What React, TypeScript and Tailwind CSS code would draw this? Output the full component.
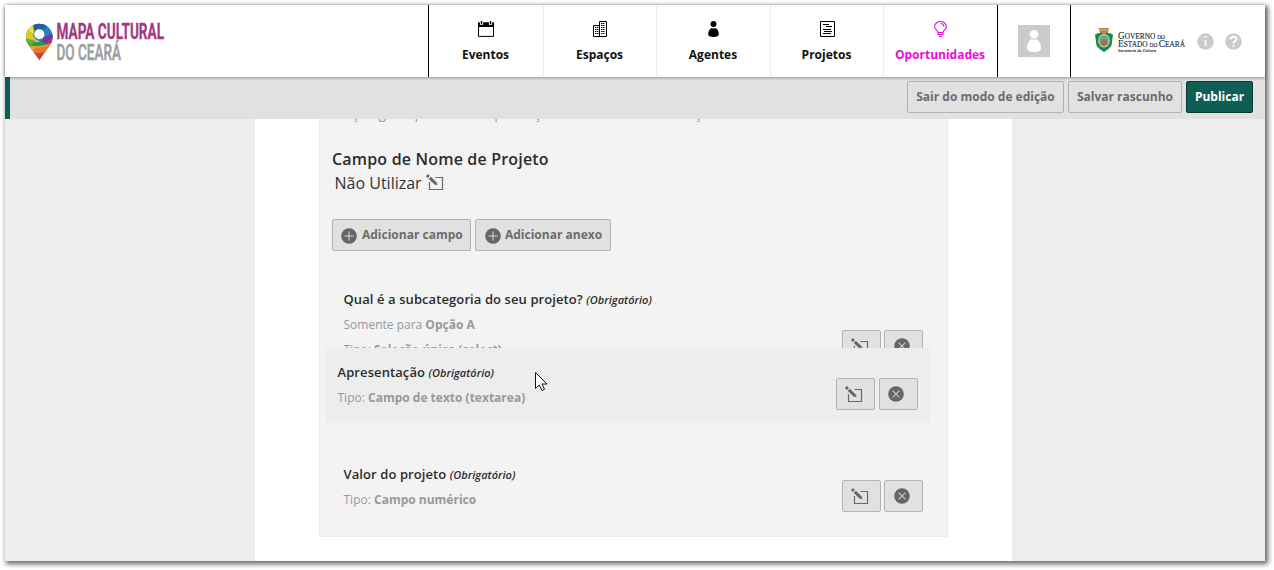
import React from "react";

const EditIcon = ({ className = "" }: { className?: string }) => (
  <svg className={className} width="18" height="17" viewBox="0 0 18 17" fill="none">
    <path d="M9.5 3.5H16.5V15.5H3.5V8" stroke="#6a6868" strokeWidth="1.2" />
    <path d="M.9 1.2L2.9 2.9" stroke="#666" strokeWidth="3" />
    <path d="M3.8 3.9L9.8 9.6" stroke="#666" strokeWidth="2.9" />
    <path d="M8.8 10.6L11.5 11.2L11 8.6Z" fill="#666" />
  </svg>
);

const PlusIcon = () => (
  <svg width="16" height="16" viewBox="0 0 16 16" className="mt-px">
    <circle cx="8" cy="8" r="7.8" fill="#666" />
    <path d="M3.5 8H12.5M8 3.5V12.5" stroke="#ddd" strokeWidth="1" />
  </svg>
);

const CloseIcon = () => (
  <svg width="16" height="16" viewBox="0 0 16 16">
    <circle cx="8" cy="8" r="7.8" fill="#666" />
    <path d="M4.6 4.6L11.4 11.4M11.4 4.6L4.6 11.4" stroke="#ccc" strokeWidth="1.1" />
  </svg>
);

const CalendarIcon = () => (
  <svg width="18" height="16" viewBox="0 0 18 16">
    <path d="M1.5 2H16.5V15.4H1.5Z" fill="#fff" stroke="#000" strokeWidth="1" />
    <path d="M1 1.5H17V6H1Z" fill="#000" />
    <path d="M4.5 0V4M13.5 0V4" stroke="#fff" strokeWidth="3.2" />
    <path d="M4.5 0V3.6M13.5 0V3.6" stroke="#000" strokeWidth="1.4" />
  </svg>
);

const BuildingIcon = () => (
  <svg width="14" height="16" viewBox="0 0 14 16" fill="none" stroke="#000">
    <path d="M.5 15.5V4.5H6.5M6.5 15.5V.5H13.5V15.5H.5" />
    <path d="M2 6.5H5.5M2 8.5H5.5M2 10.5H5.5M2 12.5H5.5M8 2.5H12M8 4.5H12M8 6.5H12M8 8.5H12M8 10.5H12M8 12.5H12" strokeDasharray="1.5 .5" />
  </svg>
);

const PersonIcon = () => (
  <svg width="11" height="16" viewBox="0 0 11 16">
    <circle cx="5.5" cy="3" r="3" />
    <path d="M3.5 7Q5.5 8.2 7.5 7C9.5 8.2 10.8 10.3 10.8 13C10.8 15.3 9 16 5.5 16S.2 15.3.2 13C.2 10.3 1.5 8.2 3.5 7Z" />
  </svg>
);

const DocumentIcon = () => (
  <svg width="15" height="16" viewBox="0 0 15 16" fill="none" stroke="#000">
    <path d="M.5.5H14.5V15.5H.5Z" />
    <path d="M3 3.5H9M6 5.5H12M3 8.5H11M4 10.5H12M3 12.5H11" />
  </svg>
);

const BulbIcon = () => (
  <svg width="13" height="16" viewBox="0 0 13 16" fill="none" stroke="#f00bd8" strokeWidth="1.1">
    <path d="M4 11.5C4 9 .6 8.8.6 5.8A5.8 5.3 0 0 1 12.4 5.8C12.4 8.8 9 9 9 11.5Z" />
    <path d="M4 13.5H9M5 15.4H8M6.5 2.5Q9.8 2.5 9.8 5.5M4 11.5V14M9 11.5V14" />
  </svg>
);

const MapLogo = () => (
  <svg width="142" height="46" viewBox="0 0 142 46" className="overflow-visible">
    <defs>
      <clipPath id="pin">
        <path d="M14.3 39L3.3 23.5A13.3 13.3 0 1 1 25.3 23.5Z" />
      </clipPath>
    </defs>
    <g clipPath="url(#pin)">
      <rect width="29" height="40" fill="#2b7fc0" />
      <path d="M8 0Q4 9 8 14Q10 20 16 20L12 25H0V0Z" fill="#dccb1c" />
      <path d="M8 0L11 8Q8 10 8.5 14L3 8Z" fill="#f0e02a" />
      <path d="M8 4Q15 -1 22 5L18 9Q13 6 9 10Z" fill="#1f62a3" />
      <path d="M19.5 16L28 12V24L20 27L14 21Q18 20 19.5 16Z" fill="#7a3590" />
      <path d="M27.6 14V22L22 25L19 22Q26 20 27.6 14Z" fill="#a6378b" />
      <path d="M0 18Q9 23 17 20L22 24L25 26H0Z" fill="#229b50" />
      <path d="M0 17Q7 19 11 20L6 24H0Z" fill="#5bb043" />
      <path d="M2 24Q14 27 27 22L25 32H3Z" fill="#f1992e" />
      <path d="M9 27Q18 27 25 24L22 32H9Z" fill="#e27c28" />
      <path d="M6 31Q14 33 22 31L15 40H13Z" fill="#e0392f" />
    </g>
    <circle cx="14.3" cy="13.3" r="5" fill="#fff" />
    <text x="31.5" y="18.2" textLength="107.5" lengthAdjust="spacingAndGlyphs" fontFamily="Roboto" fontSize="22" fontWeight="700" fill="#a43782" stroke="#a43782" strokeWidth=".3">MAPA CULTURAL</text>
    <text x="31.5" y="39" textLength="64.5" lengthAdjust="spacingAndGlyphs" fontFamily="Roboto" fontSize="22" fontWeight="500" fill="#9c9e9f" stroke="#9c9e9f" strokeWidth=".5">DO CEARÁ</text>
  </svg>
);

const GovernmentLogo = () => (
  <svg width="92" height="26" viewBox="0 0 92 26" className="overflow-visible">
    <path d="M3.5 0H14L13 5H5Z" fill="#a98a50" />
    <path d="M4 2H14" stroke="#d9bc77" />
    <path d="M0 6.5Q5 3.5 9 5.5Q13 3.5 18 6.5L16.5 17.5Q14 21.5 9 24Q4 21.5 1.5 17.5Z" fill="#168b49" />
    <ellipse cx="9" cy="12.7" rx="5.8" ry="6.8" fill="#dcd9a0" />
    <ellipse cx="9" cy="12.7" rx="4.8" ry="5.8" fill="#6f9f9c" />
    <path d="M5 15L9 10L13 15L10 18H7Z" fill="#a27646" />
    <g fontFamily="Liberation Serif" fill="#22313f" stroke="#22313f" strokeWidth=".15">
      <text x="23" y="11" fontSize="9.5" textLength="47" lengthAdjust="spacingAndGlyphs">G<tspan fontSize="7.5">OVERNO </tspan><tspan fontSize="5.5">DO</tspan></text>
      <text x="23" y="19" fontSize="9.5" textLength="67" lengthAdjust="spacingAndGlyphs">E<tspan fontSize="7.5">STADO </tspan><tspan fontSize="5.5">DO </tspan>C<tspan fontSize="7.5">EARÁ</tspan></text>
      <text x="23" y="24.3" fontSize="4" fontStyle="italic" textLength="38">Secretaria da Cultura</text>
    </g>
  </svg>
);

const nav = [
  { label: "Eventos", icon: <CalendarIcon />, style: "w-[115px] border-r border-[#eaeaea] text-[#111]" },
  { label: "Espaços", icon: <BuildingIcon />, style: "w-[113px] border-r border-[#eaeaea] text-[#111]" },
  { label: "Agentes", icon: <PersonIcon />, style: "w-[114px] border-r border-[#eaeaea] text-[#111]" },
  { label: "Projetos", icon: <DocumentIcon />, style: "w-[113px] border-r border-[#eaeaea] text-[#111]" },
  { label: "Oportunidades", icon: <BulbIcon />, style: "w-[114px] border-r border-black text-[#f00bd8]" },
];

const Actions = ({ raised = false }: { raised?: boolean }) => (
  <div className={raised ? "flex gap-1" : "flex gap-[3px]"}>
    <button className="flex h-8 w-[39px] items-center rounded-[2px] border border-[#b3b3b3] bg-[#e1e1e1] pl-2">
      <EditIcon />
    </button>
    <button className={`flex h-8 w-[39px] items-center rounded-[2px] border border-[#b3b3b3] bg-[#e1e1e1] ${raised ? "pl-2" : "pl-[9px]"}`}>
      <CloseIcon />
    </button>
  </div>
);

const FieldTitle = ({ children }: { children: React.ReactNode }) => (
  <h3 className="-ml-[0.5px] whitespace-nowrap text-[13px] leading-5 font-semibold tracking-[0.09px] text-[#2c2c2c]">
    {children} <em className="text-[11px] tracking-[0.02px]">(Obrigatório)</em>
  </h3>
);

const Detail = ({ label, value }: { label: string; value: string }) => (
  <p className="-ml-[0.5px] whitespace-nowrap text-[12px] leading-[18px] text-[#999]">
    {label} <b>{value}</b>
  </p>
);

export default function App() {
  return (
    <div className="h-[570px] overflow-hidden bg-white p-[5px] font-['Open_Sans',sans-serif]">
      <div className="flex h-[556px] w-[1260px] flex-col bg-[#ededed] shadow-[2px_2px_5px_1px_rgba(0,0,0,0.6)]">
        <header className="relative z-10 flex h-[72px] shrink-0 bg-white shadow-[0_1px_3px_rgba(0,0,0,0.35)]">
          <div className="w-[423px] pt-4 pl-5">
            <MapLogo />
          </div>
          <nav className="flex border-l border-black">
            {nav.map((item) => (
              <a key={item.label} className={`flex flex-col items-center pt-4 text-[12px] font-bold ${item.style}`}>
                {item.icon}
                <span className="mt-[9px] -ml-px leading-[18px]">{item.label}</span>
              </a>
            ))}
          </nav>
          <div className="flex w-[73px] items-center justify-center border-r border-black">
            <div className="flex size-8 items-center justify-center bg-[#cbcbcb]">
              <svg width="14" height="22" viewBox="0 0 14 22" fill="#fff">
                <circle cx="7" cy="4.2" r="4.2" />
                <path d="M4.5 9Q7 10.5 9.5 9C12 10.5 14 13.8 14 17.5C14 21 11.5 22 7 22S0 21 0 17.5C0 13.8 2 10.5 4.5 9Z" />
              </svg>
            </div>
          </div>
          <div className="flex items-center pl-6">
            <GovernmentLogo />
            <div className="ml-[10px] flex gap-[11px]">
              <svg width="17" height="17" viewBox="0 0 17 17">
                <circle cx="8.5" cy="8.5" r="8.3" fill="#cbcbcb" />
                <path d="M8.5 3V5M8.5 7V13" stroke="#fff" strokeWidth="1.7" />
              </svg>
              <svg width="17" height="17" viewBox="0 0 17 17">
                <circle cx="8.5" cy="8.5" r="8.3" fill="#cbcbcb" />
                <path d="M5.5 6.5C5.5 2.8 11.5 3 11.5 6.2C11.5 8 8.5 8 8.5 10.5M8.5 12V14" fill="none" stroke="#fff" strokeWidth="2" />
              </svg>
            </div>
          </div>
        </header>

        <div className="flex h-[42px] shrink-0 items-start justify-end gap-1 border-l-[5px] border-[#0f5e55] bg-[#e1e1e1] pt-1 pr-3 text-[12px] font-bold">
          <button className="h-8 w-[157px] rounded-[2px] border border-[#b3b3b3] text-[#6c6c6c]">Sair do modo de edição</button>
          <button className="h-8 w-[114px] rounded-[2px] border border-[#b3b3b3] text-[#6c6c6c]">Salvar rascunho</button>
          <button className="h-8 w-[67px] rounded-[2px] border border-[#053b36] bg-[#0f5e55] text-white">Publicar</button>
        </div>

        <main className="ml-[250px] h-[442px] w-[757px] overflow-hidden bg-white pl-16">
          <section className="h-[418px] w-[629px] rounded-b-[2px] border-r border-b border-l border-[#ebebeb] bg-[#f3f3f3] pl-3">
            <div className="h-[30px] overflow-hidden">
              <p className="-mt-[16px] whitespace-nowrap text-[14px] leading-5 text-[#999]">Edição geral para os campos. Ação do formulário de edição</p>
            </div>
            <h2 className="text-[16px] leading-5 font-semibold tracking-[0.18px] text-[#2c2c2c]">Campo de Nome de Projeto</h2>
            <div className="mt-[2px] flex h-6 items-center gap-1 pl-[2.5px] text-[16px] text-[#333]">
              <span className="leading-5">Não Utilizar</span>
              <EditIcon className="mb-[2px]" />
            </div>
            <div className="mt-6 flex gap-1 text-[12px] font-bold text-[#6c6c6c]">
              <button className="flex h-8 w-[139px] items-center gap-[5px] rounded-[2px] border border-[#b3b3b3] bg-[#e1e1e1] pl-2 whitespace-nowrap"><PlusIcon /> Adicionar campo</button>
              <button className="flex h-8 w-[136px] items-center gap-1 rounded-[2px] border border-[#b3b3b3] bg-[#e1e1e1] pl-[9px] whitespace-nowrap"><PlusIcon /> Adicionar anexo</button>
            </div>

            <div className="relative mt-9 flex h-[87px] w-[604px] justify-between border-b border-[#ebebeb] pr-[13px] pl-3">
              <div className="pt-[2px]">
                <FieldTitle>Qual é a subcategoria do seu projeto?</FieldTitle>
                <div className="mt-[6px]"><Detail label="Somente para" value="Opção A" /></div>
                <div className="mt-[7px]"><Detail label="Tipo:" value="Seleção única (select)" /></div>
              </div>
              <div className="pt-[43px]"><Actions /></div>
              <div className="absolute top-[61px] -left-[6px] flex h-[75px] w-[604px] justify-between bg-[#ededed] pr-3 pl-3">
                <div className="pt-[14px]">
                  <FieldTitle>Apresentação</FieldTitle>
                  <div className="mt-[6px]"><Detail label="Tipo:" value="Campo de texto (textarea)" /></div>
                </div>
                <div className="pt-[30px]"><Actions raised /></div>
                <svg className="absolute top-6 left-[209px]" width="14" height="20" viewBox="0 0 14 20">
                  <path d="M.5.5V16.5L4.3 13L7 18.5L9.5 17.3L7 12H12Z" fill="#fff" stroke="#101020" strokeWidth="1" />
                </svg>
              </div>
            </div>
            <div className="mt-[90px] flex w-[604px] justify-between pr-[13px] pl-3">
              <div>
                <FieldTitle>Valor do projeto</FieldTitle>
                <div className="mt-[6px]"><Detail label="Tipo:" value="Campo numérico" /></div>
              </div>
              <div className="pt-4"><Actions /></div>
            </div>
          </section>
        </main>
      </div>
    </div>
  );
}
